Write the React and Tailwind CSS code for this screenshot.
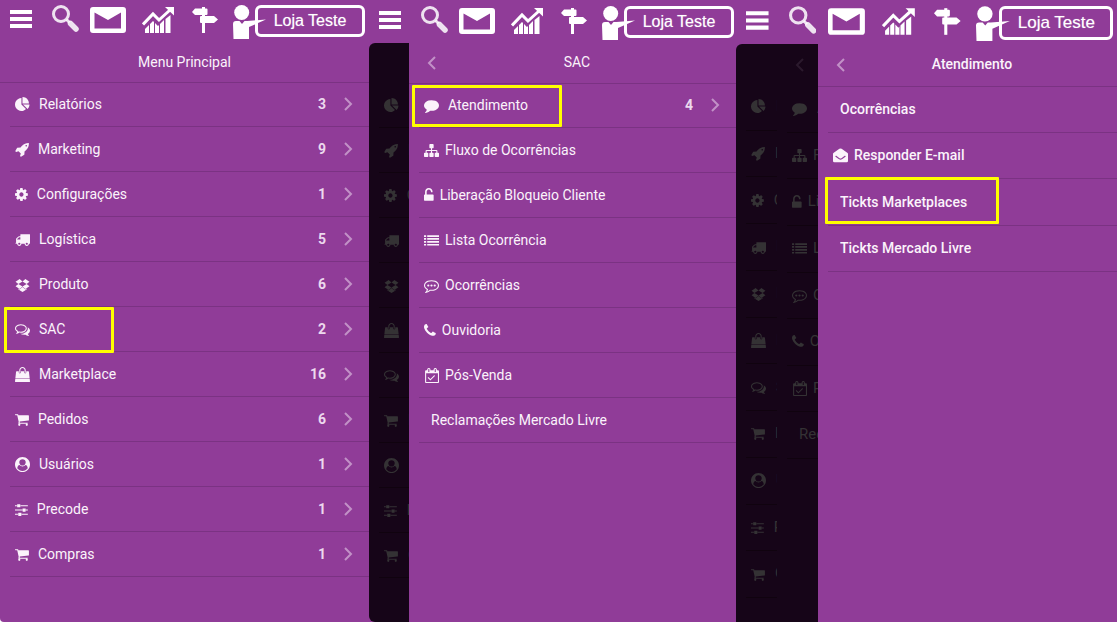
import clsx from 'clsx'

// viewBox + path of every menu glyph
const glyphs = {
  pie: ['0 0 1792 1792', 'M768 890l546 546q-106 108-247.5 168t-298.5 60q-209 0-385.5-103t-279.5-279.5-103-385.5 103-385.5 279.5-279.5 385.5-103v762zm187 6h773q0 157-60 298.5t-168 247.5zm709-128h-768v-768q209 0 385.5 103t279.5 279.5 103 385.5z'],
  rocket: ['0 0 1664 1792', 'M1440 448q0-40-28-68t-68-28-68 28-28 68 28 68 68 28 68-28 28-68zm224-288q0 249-75.5 430.5t-253.5 360.5q-81 80-195 176l-20 379q-2 16-16 26l-384 224q-7 4-16 4-12 0-23-9l-64-64q-13-14-8-32l85-276-281-281-276 85q-3 1-9 1-14 0-23-9l-64-64q-17-19-5-39l224-384q10-14 26-16l379-20q96-114 176-195 188-187 358-258t431-71q14 0 24 9.5t10 22.5z'],
  cog: ['128 0 1536 1792', 'M1152 896q0-106-75-181t-181-75-181 75-75 181 75 181 181 75 181-75 75-181zm512-109v222q0 12-8 23t-20 13l-185 28q-19 54-39 91 35 50 107 138 10 12 10 25t-9 23q-27 37-99 108t-94 71q-12 0-26-9l-138-108q-44 23-91 38-16 136-29 186-7 28-36 28h-222q-14 0-24.5-8.5t-11.5-21.5l-28-184q-49-16-90-37l-141 107q-10 9-25 9-14 0-25-11-126-114-165-168-7-10-7-23 0-12 8-23 15-21 51-66.5t54-70.5q-27-50-41-99l-183-27q-13-2-21-12.5t-8-23.5v-222q0-12 8-23t19-13l186-28q14-46 39-92-40-57-107-138-10-12-10-24 0-10 9-23 26-36 98.5-107.5t94.5-71.5q13 0 26 10l138 107q44-23 91-38 16-136 29-186 7-28 36-28h222q14 0 24.5 8.5t11.5 21.5l28 184q49 16 90 37l142-107q9-9 24-9 13 0 25 10 129 119 165 170 7 8 7 22 0 12-8 23-15 21-51 66.5t-54 70.5q26 50 41 98l183 28q13 2 21 12.5t8 23.5z'],
  truck: ['0 0 1792 1792', 'M640 1408q0-52-38-90t-90-38-90 38-38 90 38 90 90 38 90-38 38-90zm-384-512h384v-256h-158q-13 0-22 9l-195 195q-9 9-9 22v30zm1280 512q0-52-38-90t-90-38-90 38-38 90 38 90 90 38 90-38 38-90zm256-1088v1024q0 15-4 26.5t-13.5 18.5-16.5 11.5-23.5 6-22.5 2-25.5 0-22.5-.5q0 106-75 181t-181 75-181-75-75-181h-384q0 106-75 181t-181 75-181-75-75-181h-64q-3 0-22.5.5t-25.5 0-22.5-2-23.5-6-16.5-11.5-13.5-18.5-4-26.5q0-26 19-45t45-19v-320q0-8-.5-35t0-38 2.5-34.5 6.5-37 14-30.5 22.5-30l198-198q19-19 50.5-32t58.5-13h160v-192q0-26 19-45t45-19h1024q26 0 45 19t19 45z'],
  dropbox: ['0 0 1792 1792', 'M402 829l494 305-342 285-490-319zm986 555v108l-490 293v1l-1-1-1 1v-1l-489-293v-108l147 96 342-284v-2l1 1 1-1v2l343 284zm-834-1146l342 285-494 304-338-270zm836 591l338 271-489 319-343-285zm-151-591l489 319-338 270-494-304z'],
  comments: ['0 0 1792 1792', 'M704 384q-153 0-286 52t-211.5 141-78.5 191q0 82 53 158t149 132l97 56-35 84q34-20 62-39l44-31 53 10q78 14 153 14 153 0 286-52t211.5-141 78.5-191-78.5-191-211.5-141-286-52zm0-128q191 0 353.5 68.5t256.5 186.5 94 257-94 257-256.5 186.5-353.5 68.5q-86 0-176-16-124 88-278 128-36 9-86 16h-3q-11 0-20.5-8t-11.5-21q-1-3-1-6.5t.5-6.5 2-6l2.5-5 3.5-5.5 4-5 4.5-5 4-4.5q5-6 23-25t26-29.5 22.5-29 25-38.5 20.5-44q-124-72-195-177t-71-224q0-139 94-257t256.5-186.5 353.5-68.5zm822 1169q10 24 20.5 44t25 38.5 22.5 29 26 29.5 23 25q1 1 4 4.5t4.5 5 4 5 3.5 5.5l2.5 5 2 6 .5 6.5-1 6.5q-3 14-13 22t-22 7q-50-7-86-16-154-40-278-128-90 16-176 16-271 0-472-132 58 4 88 4 161 0 309-45t264-129q125-92 192-212t67-254q0-77-23-152 129 71 204 178t75 230q0 120-71 224.5t-195 176.5z'],
  bag: ['0 0 1792 1792', 'M1757 1408l35 313q3 28-16 50-19 21-48 21h-1664q-29 0-48-21-19-22-16-50l35-313h1722zm-93-839l86 775h-1708l86-775q3-24 21-40.5t43-16.5h256v128q0 53 37.5 90.5t90.5 37.5 90.5-37.5 37.5-90.5v-128h384v128q0 53 37.5 90.5t90.5 37.5 90.5-37.5 37.5-90.5v-128h256q25 0 43 16.5t21 40.5zm-384-185v256q0 26-19 45t-45 19-45-19-19-45v-256q0-106-75-181t-181-75-181 75-75 181v256q0 26-19 45t-45 19-45-19-19-45v-256q0-159 112.5-271.5t271.5-112.5 271.5 112.5 112.5 271.5z'],
  cart: ['64 0 1664 1792', 'M704 1536q0 52-38 90t-90 38-90-38-38-90 38-90 90-38 90 38 38 90zm896 0q0 52-38 90t-90 38-90-38-38-90 38-90 90-38 90 38 38 90zm128-1088v512q0 24-16.5 42.5t-40.5 21.5l-1044 122q13 60 13 70 0 16-24 64h920q26 0 45 19t19 45-19 45-45 19h-1024q-26 0-45-19t-19-45q0-11 8-31.5t16-36 21.5-40 15.5-29.5l-177-823h-204q-26 0-45-19t-19-45 19-45 45-19h256q16 0 28.5 6.5t19.5 15.5 13 24.5 8 26 5.5 29.5 4.5 26h1201q26 0 45 19t19 45z'],
  user: ['0 0 1792 1792', 'M1523 1339q-22-155-87.5-257.5t-184.5-118.5q-67 74-159.5 115.5t-195.5 41.5-195.5-41.5-159.5-115.5q-119 16-184.5 118.5t-87.5 257.5q106 150 271 237.5t356 87.5 356-87.5 271-237.5zm-243-699q0-159-112.5-271.5t-271.5-112.5-271.5 112.5-112.5 271.5 112.5 271.5 271.5 112.5 271.5-112.5 112.5-271.5zm512 256q0 182-71 347.5t-190.5 286-285.5 191.5-349 71q-182 0-348-71t-286-191-191-286-71-348 71-348 191-286 286-191 348-71 348 71 286 191 191 286 71 348z'],
  sliders: ['128 0 1536 1792', 'M480 1408v128h-352v-128h352zm352-128q26 0 45 19t19 45v256q0 26-19 45t-45 19h-256q-26 0-45-19t-19-45v-256q0-26 19-45t45-19h256zm160-384v128h-864v-128h864zm-640-512v128h-224v-128h224zm1312 1024v128h-736v-128h736zm-960-1152q26 0 45 19t19 45v256q0 26-19 45t-45 19h-256q-26 0-45-19t-19-45v-256q0-26 19-45t45-19h256zm640 512q26 0 45 19t19 45v256q0 26-19 45t-45 19h-256q-26 0-45-19t-19-45v-256q0-26 19-45t45-19h256zm320 128v128h-224v-128h224zm0-512v128h-864v-128h864z'],
  comment: ['0 0 1792 1792', 'M1792 896q0 174-120 321.5t-326 233-450 85.5q-70 0-145-8-198 175-460 242-49 14-114 22-17 2-30.5-9t-17.5-29v-1q-3-4-.5-12t2-10 4.5-9.5l6-9 7-8.5 8-9q7-8 31-34.5t34.5-38 31-39.5 32.5-51 27-59 26-76q-157-89-247.5-220t-90.5-281q0-130 71-248.5t191-204.5 286-136.5 348-50.5q244 0 450 85.5t326 233 120 321.5z'],
  sitemap: ['0 0 1792 1792', 'M1792 1248v320q0 40-28 68t-68 28h-320q-40 0-68-28t-28-68v-320q0-40 28-68t68-28h96v-192h-512v192h96q40 0 68 28t28 68v320q0 40-28 68t-68 28h-320q-40 0-68-28t-28-68v-320q0-40 28-68t68-28h96v-192h-512v192h96q40 0 68 28t28 68v320q0 40-28 68t-68 28h-320q-40 0-68-28t-28-68v-320q0-40 28-68t68-28h96v-192q0-52 38-90t90-38h512v-192h-96q-40 0-68-28t-28-68v-320q0-40 28-68t68-28h320q40 0 68 28t28 68v320q0 40-28 68t-68 28h-96v192h512q52 0 90 38t38 90v192h96q40 0 68 28t28 68z'],
  unlock: ['320 0 1152 1792', 'M1376 768q40 0 68 28t28 68v576q0 40-28 68t-68 28h-960q-40 0-68-28t-28-68v-576q0-40 28-68t68-28h32v-320q0-185 131.5-316.5t316.5-131.5 316.5 131.5 131.5 316.5q0 26-19 45t-45 19h-64q-26 0-45-19t-19-45q0-106-75-181t-181-75-181 75-75 181v320h736z'],
  list: ['0 0 1792 1792', 'M0 256h256v208H0zM384 256h1408v208H384zM0 604h256v208H0zM384 604h1408v208H384zM0 952h256v208H0zM384 952h1408v208H384zM0 1300h256v208H0zM384 1300h1408v208H384z'],
  commenting: ['0 0 1792 1792', 'M640 896q0 53-37.5 90.5t-90.5 37.5-90.5-37.5-37.5-90.5 37.5-90.5 90.5-37.5 90.5 37.5 37.5 90.5zm384 0q0 53-37.5 90.5t-90.5 37.5-90.5-37.5-37.5-90.5 37.5-90.5 90.5-37.5 90.5 37.5 37.5 90.5zm384 0q0 53-37.5 90.5t-90.5 37.5-90.5-37.5-37.5-90.5 37.5-90.5 90.5-37.5 90.5 37.5 37.5 90.5zm-512-512q-204 0-381.5 69.5t-282 187.5-104.5 255q0 112 71.5 213.5t201.5 175.5l87 50-27 96q-24 91-70 172 152-63 275-171l43-38 57 6q69 8 130 8 204 0 381.5-69.5t282-187.5 104.5-255-104.5-255-282-187.5-381.5-69.5zm896 512q0 174-120 321.5t-326 233-450 85.5q-70 0-145-8-198 175-460 242-49 14-114 22h-5q-15 0-27-10.5t-16-27.5v-1q-3-4-.5-12t2-10 4.5-9.5l6-9 7-8.5 8-9q7-8 31-34.5t34.5-38 31-39.5 32.5-51 27-59 26-76q-157-89-247.5-220t-90.5-281q0-174 120-321.5t326-233 450-85.5 450 85.5 326 233 120 321.5z'],
  phone: ['192 0 1408 1792', 'M1600 1240q0 27-10 70.5t-21 68.5q-21 50-122 106-94 51-186 51-27 0-53-3.5t-57.5-12.5-47-14.5-55.5-20.5-49-18q-98-35-175-83-127-79-264-216t-216-264q-48-77-83-175-3-9-18-49t-20.5-55.5-14.5-47-12.5-57.5-3.5-53q0-92 51-186 56-101 106-122 25-11 68.5-21t70.5-10q14 0 21 3 18 6 53 76 11 19 30 54t35 63.5 31 53.5q3 4 17.5 25t21.5 35.5 7 28.5q0 20-28.5 50t-62 55-62 53-28.5 46q0 9 5 22.5t8.5 20.5 14 24 11.5 19q76 137 174 235t235 174q2 1 19 11.5t24 14 20.5 8.5 22.5 5q18 0 46-28.5t53-62 55-62 50-28.5q14 0 28.5 7t35.5 21.5 25 17.5q25 15 53.5 31t63.5 35 54 30q70 35 76 53 3 7 3 21z'],
  calendar: ['0 0 1792 1792', 'M1303 964l-512 512q-10 9-23 9t-23-9l-288-288q-9-10-9-23t9-22l46-46q9-9 22-9t23 9l220 220 444-444q10-9 23-9t22 9l46 46q9 9 9 22t-9 23zm-1047 700h1408v-1024h-1408v1024zm384-1216v-288q0-14-9-23t-23-9h-64q-14 0-23 9t-9 23v288q0 14 9 23t23 9h64q14 0 23-9t9-23zm768 0v-288q0-14-9-23t-23-9h-64q-14 0-23 9t-9 23v288q0 14 9 23t23 9h64q14 0 23-9t9-23zm384-64v1280q0 52-38 90t-90 38h-1408q-52 0-90-38t-38-90v-1280q0-52 38-90t90-38h128v-96q0-66 47-113t113-47h64q66 0 113 47t47 113v96h384v-96q0-66 47-113t113-47h64q66 0 113 47t47 113v96h128q52 0 90 38t38 90z'],
  envelope: ['0 0 1792 1792', 'M0 700Q0 640 50 600L760 90Q896 10 1032 90L1742 600Q1792 640 1792 700V1552Q1792 1712 1632 1712H160Q0 1712 0 1552ZM300 950Q260 1000 300 1040L720 1340Q896 1440 1072 1340L1492 1040Q1532 1000 1492 950Q1460 910 1400 940L1010 1210Q896 1280 782 1210L392 940Q332 910 300 950Z'],
}

const mainItems = [
  { icon: 'pie', label: 'Relatórios', count: 3 },
  { icon: 'rocket', label: 'Marketing', count: 9 },
  { icon: 'cog', label: 'Configurações', count: 1 },
  { icon: 'truck', label: 'Logística', count: 5 },
  { icon: 'dropbox', label: 'Produto', count: 6 },
  { icon: 'comments', label: 'SAC', count: 2, mark: '-left-1.5 top-0 h-[46px] w-[110px]' },
  { icon: 'bag', label: 'Marketplace', count: 16 },
  { icon: 'cart', label: 'Pedidos', count: 6 },
  { icon: 'user', label: 'Usuários', count: 1 },
  { icon: 'sliders', label: 'Precode', count: 1 },
  { icon: 'cart', label: 'Compras', count: 1 },
]

// behind an open submenu Marketplace comes before SAC
const behindItems = [...mainItems.slice(0, 5), mainItems[6], mainItems[5], ...mainItems.slice(7)]

const sacItems = [
  { icon: 'comment', label: 'Atendimento', count: 4, mark: '-left-[7px] top-0.5 h-[42px] w-[150px]' },
  { icon: 'sitemap', label: 'Fluxo de Ocorrências' },
  { icon: 'unlock', label: 'Liberação Bloqueio Cliente' },
  { icon: 'list', label: 'Lista Ocorrência' },
  { icon: 'commenting', label: 'Ocorrências' },
  { icon: 'phone', label: 'Ouvidoria' },
  { icon: 'calendar', label: 'Pós-Venda' },
  { label: 'Reclamações Mercado Livre' },
]

const atendimentoItems = [
  { label: 'Ocorrências' },
  { icon: 'envelope', label: 'Responder E-mail' },
  { label: 'Tickts Marketplaces', mark: '-left-[3px] -top-0.5 h-[47px] w-[174px]' },
  { label: 'Tickts Mercado Livre' },
]

function Glyph({ name }) {
  const [viewBox, d] = glyphs[name]
  return (
    <svg viewBox={viewBox} className="h-[15px] w-auto shrink-0" fill="currentColor" fillRule="evenodd" aria-hidden="true">
      <path d={d} />
    </svg>
  )
}

function Chevron({ back, className }) {
  return (
    <svg viewBox="0 0 9 14" className={clsx('h-3.5 w-[9px] shrink-0', className)} fill="none" stroke="currentColor" strokeWidth="2" aria-hidden="true">
      <path d={back ? 'M8 1L2 7l6 6' : 'M1 1l6 6-6 6'} />
    </svg>
  )
}

function TopBar({ large, className }) {
  const h = large ? 'h-[41px]' : 'h-10'
  return (
    <header className={clsx('flex items-start pl-2.5 text-white', className)}>
      <button type="button" aria-label="Menu">
        <svg viewBox="10 0 22 40" className={clsx(h, 'w-auto')} fill="currentColor">
          <path d="M10 10h22v4H10zM10 17h22v4H10zM10 24h22v4H10z" />
        </svg>
      </button>
      <button type="button" aria-label="Buscar" className="ml-5">
        <svg viewBox="52 0 27 40" className={clsx(h, 'w-auto')} fill="none" stroke="currentColor">
          <circle cx="61" cy="14" r="7.5" strokeWidth="3" opacity="0.85" />
          <path d="M66.500 19.500l3 3" strokeWidth="3" opacity="0.85" />
          <path d="M70.500 23.500l5.500 5.500" strokeWidth="5.500" strokeLinecap="round" opacity="0.85" />
        </svg>
      </button>
      <button type="button" aria-label="Mensagens" className={large ? 'ml-3' : 'ml-[11px]'}>
        <svg viewBox="90 0 36 40" className={clsx(h, 'w-auto')} fill="currentColor" fillRule="evenodd">
          <path d="M93 7h30q3 0 3 3v20q0 3-3 3H93q-3 0-3-3V10q0-3 3-3zM94.500 12.500v16h26.500v-16L108 20z" />
        </svg>
      </button>
      <button type="button" aria-label="Gráficos" className={large ? 'ml-[17px]' : 'ml-4'}>
        <svg viewBox="142 0 32 40" className={clsx(h, 'w-auto')} fill="currentColor">
          <path d="M145 29l4-4v8h-4zM150 24l3-3 1 1v11h-4zM155 23l3 3 1-1v8h-4zM160 24l4-4v13h-4zM165.500 19l5-4v18h-5z" />
          <path d="M143 24.500l10-10.500 6 6 11-10" fill="none" stroke="currentColor" strokeWidth="3" />
          <path d="M165 7h9v8.500z" />
        </svg>
      </button>
      <button type="button" aria-label="Navegação" className={large ? 'ml-[19px]' : 'ml-[18px]'}>
        <svg viewBox="192 0 26 40" className={clsx(h, 'w-auto')} fill="currentColor">
          <path d="M202 7h3v26h-3z" />
          <path d="M192 12l3-3.500h11.500q1 0 1 1v4.500q0 1-1 1H195zM201 16h13l4 3.500-4 3.500h-13q-1 0-1-1v-5q0-1 1-1z" />
        </svg>
      </button>
      <div className="ml-[15px] flex items-start">
        <svg viewBox="233 0 34 40" className={clsx(h, 'relative w-auto')} fill="currentColor" aria-hidden="true">
          <circle cx="241.700" cy="12.500" r="7.500" />
          <path d="M233 24q0-3 3-3l3.500 0 2.500 3 2.500-3h3l18.500-1.500-17 7.500V39h-15.500z" />
        </svg>
        <button
          type="button"
          className={clsx(
            'mt-[5px] rounded-md border-[3px] border-white text-center font-["Liberation_Sans",Arial,sans-serif] whitespace-nowrap [text-shadow:0_0_1px_#ffffff80]',
            large ? '-ml-[11px] h-[34px] w-[114px] text-[17px]' : '-ml-3 h-8 w-[110px] text-base'
          )}
        >
          Loja Teste
        </button>
      </div>
    </header>
  )
}

function Title({ children, back, className }) {
  return (
    <div className={clsx('-mb-px flex shrink-0 items-center border-b border-[#7b3283] px-[18px]', className)}>
      {back && (
        <button type="button" aria-label="Voltar" className="text-[#c291c7]">
          <Chevron back />
        </button>
      )}
      <h2 className="flex-1 pb-0.5 text-center">{children}</h2>
    </div>
  )
}

function MenuList({ items, dim, className }) {
  return (
    <ul className={clsx('grid shrink-0', className)} aria-hidden={dim}>
      {items.map((item) => (
        <li
          key={item.label}
          className={clsx('relative ml-2.5 min-w-0 border-b', dim ? 'border-[#10030f]' : 'border-[#7b3283]')}
        >
          <a
            href="#"
            tabIndex={dim ? -1 : undefined}
            className={clsx(
              'flex h-full items-center pl-[5px] whitespace-nowrap',
              dim ? 'pr-0' : 'pr-4',
              item.count ? (dim ? 'gap-2.5' : 'gap-[9px]') : 'gap-1.5'
            )}
          >
            {item.icon ? <Glyph name={item.icon} /> : <span className="w-px shrink-0" />}
            <span className="min-w-0 flex-1 overflow-hidden">{item.label}</span>
            {item.count && !dim && (
              <>
                <span className="mr-[9px] font-bold text-[#ecd9ee]">{item.count}</span>
                <Chevron className="text-[#c291c7]" />
              </>
            )}
          </a>
          {item.mark && !dim && (
            <span className={clsx('pointer-events-none absolute rounded-[1px] border-[3px] border-[#ffff00]', item.mark)} />
          )}
        </li>
      ))}
    </ul>
  )
}

export default function App() {
  return (
    <div className="bg-white">
      <main className="grid min-h-screen grid-cols-[369fr_367fr_381fr] rounded-bl bg-[#903c98] font-[Roboto,sans-serif] text-sm text-[#fbf3fb]">
        <section className="flex min-w-0 flex-col">
          <TopBar className="h-[43px]" />
          <Title className="h-10">Menu Principal</Title>
          <MenuList items={mainItems} className="auto-rows-[45px]" />
        </section>

        <section className="flex min-w-0 flex-col">
          <TopBar className="h-[43px] pt-px" />
          <div className="flex flex-1">
            <div className="w-10 shrink-0 overflow-hidden rounded-l-md bg-[#160518] pt-10 text-[#343234]">
              <MenuList items={behindItems} dim className="auto-rows-[45px]" />
            </div>
            <div className="flex min-w-0 flex-1 flex-col">
              <Title back className="h-[41px]">SAC</Title>
              <MenuList items={sacItems} className="auto-rows-[45px]" />
            </div>
          </div>
        </section>

        <section className="flex min-w-0 flex-col">
          <TopBar large className="h-11 pt-px" />
          <div className="flex flex-1">
            <div className="flex w-[82px] shrink-0 overflow-hidden rounded-tl-md bg-[#160518] text-[15px] text-[#343234]">
              <div className="w-[41px] shrink-0 overflow-hidden pt-10">
                <MenuList items={behindItems} dim className="h-[514px] auto-rows-fr" />
              </div>
              <div className="w-[41px] shrink-0 overflow-hidden">
                <div className="flex h-[42px] items-center pl-[18px] text-[#2b1a2d]">
                  <Chevron back />
                </div>
                <MenuList items={sacItems} dim className="h-[373px] auto-rows-fr" />
              </div>
            </div>
            <div className="flex min-w-0 flex-1 flex-col font-medium">
              <Title back className="h-[43px]">Atendimento</Title>
              <MenuList items={atendimentoItems} className="h-[186px] auto-rows-fr" />
            </div>
          </div>
        </section>
      </main>
    </div>
  )
}
